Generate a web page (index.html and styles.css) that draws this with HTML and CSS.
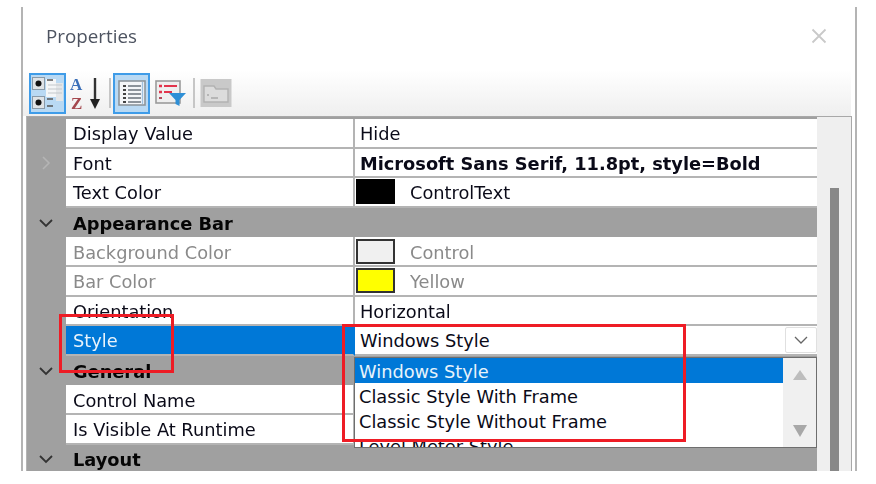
FILE: index.html
```html
<!DOCTYPE html>
<html lang="en">
<head>
<meta charset="utf-8">
<title>Properties</title>
<link rel="stylesheet" href="styles.css">
</head>
<body>
<div class="panel">
  <header class="title-bar">
    <span class="title">Properties</span>
    <svg class="close" width="16" height="16" viewBox="0 0 16 16"><path d="M1.500 1.500l13 13M14.500 1.500l-13 13" stroke="#c9c9c9" stroke-width="1.800" fill="none"/></svg>
  </header>
  <div class="toolbar">
    <button class="tool active">
      <svg width="33" height="37" viewBox="0 0 33 37">
        <rect x="1.500" y="2.500" width="12" height="12" fill="#dfe3e6" stroke="#8a9aa8"/><circle cx="7.500" cy="8.500" r="3" fill="#111"/>
        <rect x="1.500" y="21.500" width="12" height="12" fill="#dfe3e6" stroke="#8a9aa8"/><circle cx="7.500" cy="27.500" r="3" fill="#111"/>
        <rect x="15" y="4" width="10" height="18" fill="#f4f6f7"/>
        <rect x="25" y="8" width="7" height="18" fill="#e3e6e8"/>
        <path d="M16 5h6M16 24h6M16 31h6" stroke="#555" stroke-width="1.600"/>
        <path d="M17 10h14M17 14h14M17 18h14" stroke="#c4c8cb" stroke-width="1.200"/>
      </svg>
    </button>
    <span class="tool sort">
      <svg width="34" height="38" viewBox="0 0 34 38">
        <text x="1" y="16" class="az az-a">A</text>
        <text x="2" y="35" class="az az-z">Z</text>
        <path d="M26 4v24" stroke="#333" stroke-width="2.400"/><path d="M21 25h10l-5 10z" fill="#222"/>
      </svg>
    </span>
    <span class="sep"></span>
    <button class="tool active list-tool">
      <svg width="30" height="30" viewBox="0 0 30 30">
        <rect x="2" y="3" width="26" height="24" fill="#f4f6f8" stroke="#8d959b" stroke-width="1.600"/>
        <path d="M6 8h3M6 12h3M6 16h3M6 20h3M6 24h3" stroke="#444" stroke-width="1.800"/>
        <path d="M11 8h13M11 12h13M11 16h13M11 20h13M11 24h13" stroke="#8c939a" stroke-width="1.800"/>
        <path d="M25.500 4v22" stroke="#9fc0dd" stroke-width="1.400"/>
      </svg>
    </button>
    <span class="tool plain">
      <svg width="32" height="30" viewBox="0 0 32 30">
        <rect x="1" y="3" width="24" height="22" fill="#efefef" stroke="#9b9b9b" stroke-width="1.600"/>
        <path d="M4 8h3M4 14h3" stroke="#e2344c" stroke-width="2.400"/>
        <path d="M9 8h13M9 14h8" stroke="#e2344c" stroke-width="2"/>
        <path d="M4 20h3" stroke="#b04a5a" stroke-width="2"/>
        <path d="M14 15h17l-6.500 7v6l-4-2v-4z" fill="#2e8fd6"/>
      </svg>
    </span>
    <span class="sep"></span>
    <span class="tool plain">
      <svg width="32" height="30" viewBox="0 0 32 30">
        <rect x="0.500" y="1" width="31" height="28" fill="#c9c9c9"/>
        <path d="M4 8h10l2 3h12v13H4z" fill="#dcdcdc" stroke="#b2b2b2" stroke-width="1.400"/>
        <path d="M7 17h2M11 20h7" stroke="#a9a9a9" stroke-width="1.600"/>
      </svg>
    </span>
  </div>
  <div class="grid-frame">
    <div class="grid">
      <div class="row"><div class="gutter"></div><div class="name">Display Value</div><div class="value">Hide</div></div>
      <div class="row"><div class="gutter"><svg class="chev" width="12" height="16" viewBox="0 0 12 16"><path d="M3 2l6 6-6 6" stroke="#b5b5b5" stroke-width="1.600" fill="none"/></svg></div><div class="name">Font</div><div class="value strong">Microsoft Sans Serif, 11.8pt, style=Bold</div></div>
      <div class="row"><div class="gutter"></div><div class="name">Text Color</div><div class="value"><span class="swatch swatch-black"></span><span class="swatch-label">ControlText</span></div></div>
      <div class="row category"><div class="gutter"><svg class="chev" width="16" height="10" viewBox="0 0 16 10"><path d="M2 2l6 6 6-6" stroke="#333" stroke-width="1.800" fill="none"/></svg></div><div class="cat-name">Appearance Bar</div></div>
      <div class="row muted"><div class="gutter"></div><div class="name">Background Color</div><div class="value"><span class="swatch swatch-control"></span><span class="swatch-label">Control</span></div></div>
      <div class="row muted"><div class="gutter"></div><div class="name">Bar Color</div><div class="value"><span class="swatch swatch-yellow"></span><span class="swatch-label">Yellow</span></div></div>
      <div class="row"><div class="gutter"></div><div class="name">Orientation</div><div class="value">Horizontal</div></div>
      <div class="row selected"><div class="gutter"></div><div class="name">Style</div><div class="value">Windows Style<span class="drop-btn"><svg width="14" height="8" viewBox="0 0 14 8"><path d="M1 1l6 6 6-6" stroke="#666" stroke-width="1.300" fill="none"/></svg></span></div></div>
      <div class="row category"><div class="gutter"><svg class="chev" width="16" height="10" viewBox="0 0 16 10"><path d="M2 2l6 6 6-6" stroke="#333" stroke-width="1.800" fill="none"/></svg></div><div class="cat-name">General</div></div>
      <div class="row"><div class="gutter"></div><div class="name">Control Name</div><div class="value"></div></div>
      <div class="row"><div class="gutter"></div><div class="name">Is Visible At Runtime</div><div class="value"></div></div>
      <div class="row category"><div class="gutter"><svg class="chev" width="16" height="10" viewBox="0 0 16 10"><path d="M2 2l6 6 6-6" stroke="#333" stroke-width="1.800" fill="none"/></svg></div><div class="cat-name">Layout</div></div>
    </div>
    <div class="scrollbar"><div class="thumb"></div></div>
  </div>
  <div class="dropdown">
    <div class="options">
      <div class="option on">Windows Style</div>
      <div class="option">Classic Style With Frame</div>
      <div class="option">Classic Style Without Frame</div>
      <div class="option">Level Meter Style</div>
    </div>
    <div class="drop-scroll">
      <svg width="16" height="12" viewBox="0 0 16 12"><path d="M8 1l7 10H1z" fill="#bdbdbd"/></svg>
      <svg width="16" height="14" viewBox="0 0 16 14"><path d="M8 13L1 1h14z" fill="#a8a8a8"/></svg>
    </div>
  </div>
  <div class="callout callout-name"></div>
  <div class="callout callout-value"></div>
</div>
</body>
</html>
```
FILE: styles.css
```css
* { box-sizing: border-box; }
html, body { margin: 0; height: 100%; background: #fff; overflow: hidden; }
body {
  padding: 7px 0 0 21px;
  font-family: "DejaVu Sans", sans-serif;
  font-size: 17.8px;
  color: #0a0a18;
}
.panel {
  position: relative;
  width: 836px;
  height: 464px;
  border-left: 2px solid #b4b4b4;
  border-right: 2px solid #b4b4b4;
  overflow: hidden;
  display: flex;
  flex-direction: column;
  filter: blur(.35px);
}
.title-bar {
  height: 63px;
  flex: none;
  display: flex;
  align-items: center;
  justify-content: space-between;
  padding: 0 28px 6px 23px;
}
.title { font-family: "Open Sans", sans-serif; font-size: 18.800px; color: #4d5360; }
.close { display: block; }
.toolbar {
  height: 46px;
  flex: none;
  width: 828px;
  display: flex;
  align-items: center;
  padding: 0 0 0 6px;
  background: linear-gradient(#fff, #efefef);
  border-top-right-radius: 4px;
}
.tool {
  height: 41px;
  width: 37px;
  padding: 0;
  flex: none;
  display: flex;
  align-items: center;
  justify-content: center;
  border: 0;
  background: none;
}
.tool.active { border: 2px solid #3f9ce8; background: #b9d9f3; }
.sort { width: 36px; margin-left: 2px; }
.plain { width: 34px; margin-left: 4px; }
.sep { width: 2px; height: 30px; background: #c6c6c6; margin: 0 0 0 5px; flex: none; }
.list-tool { margin-left: 2px; }
.az { font-family: "Liberation Serif", serif; font-weight: 700; font-size: 17px; }
.az-a { fill: #3b6fb8; }
.az-z { fill: #a5484e; }
.grid-frame {
  flex: none;
  height: 360px;
  display: flex;
  border-left: 1px solid #b4b4b4;
  border-right: 1px solid #a8a8a8;
  border-top: 1px solid #a8a8a8;
  margin-left: 3px;
  width: 826px;
}
.grid { width: 790px; flex: none; border-top: 2px solid #a0a0a0; }
.row { display: flex; height: 29.600px; }
.gutter {
  width: 39px;
  flex: none;
  background: #a0a0a0;
  display: flex;
  align-items: center;
  justify-content: center;
  padding-right: 2px;
}
.name, .value {
  display: flex;
  align-items: center;
  background: #fff;
  border-bottom: 2px solid #b4b4b4;
  white-space: nowrap;
  padding-top: 2px;
}
.name { width: 289px; flex: none; padding-left: 7px; border-right: 2px solid #b4b4b4; overflow: hidden; }
.value { flex: 1; padding-left: 5px; position: relative; }
.strong { font-weight: 700; }
.category { background: #a0a0a0; }
.cat-name { display: flex; align-items: center; padding: 1px 0 0 7px; font-weight: 700; color: #050505; }
.muted .name, .muted .value { color: #8a8a8a; }
.selected .name { background: #0078d7; color: #e8f3fb; border-bottom-color: #b4b4b4; border-right-color: #0078d7; }
.swatch { width: 39px; height: 25px; border: 2px solid #333; margin: -2px 0 0 -4px; flex: none; }
.swatch-black { background: #000; border-color: #000; }
.swatch-control { background: #f0f0f0; }
.swatch-yellow { background: #ff0; }
.swatch-label { margin-left: 15px; }
.drop-btn {
  position: absolute;
  right: 0;
  top: 1px;
  width: 32px;
  height: 26px;
  display: flex;
  align-items: center;
  justify-content: center;
  border: 1.500px solid #e0e0e0;
  border-radius: 2px;
  background: #fff;
}
.scrollbar { flex: 1; background: #efefef; padding: 71px 0 0 13px; }
.thumb { width: 9px; height: 300px; background: #888; }
.dropdown {
  position: absolute;
  left: 331px;
  top: 350px;
  width: 463px;
  height: 91px;
  background: #fff;
  border: 1.500px solid #6e6e6e;
  display: flex;
  overflow: hidden;
}
.options { flex: 1; overflow: hidden; }
.option { height: 25px; line-height: 27px; padding-left: 4px; white-space: nowrap; }
.option.on { background: #0078d7; color: #e8f3fb; }
.drop-scroll {
  width: 33px;
  background: #f0f0f0;
  display: flex;
  flex-direction: column;
  justify-content: space-between;
  align-items: center;
  padding: 11px 0 9px;
}
.callout { position: absolute; border: 3px solid #ee1c25; pointer-events: none; }
.callout-name { left: 36px; top: 307px; width: 115px; height: 59px; }
.callout-value { left: 319px; top: 317px; width: 344px; height: 118px; }
```
